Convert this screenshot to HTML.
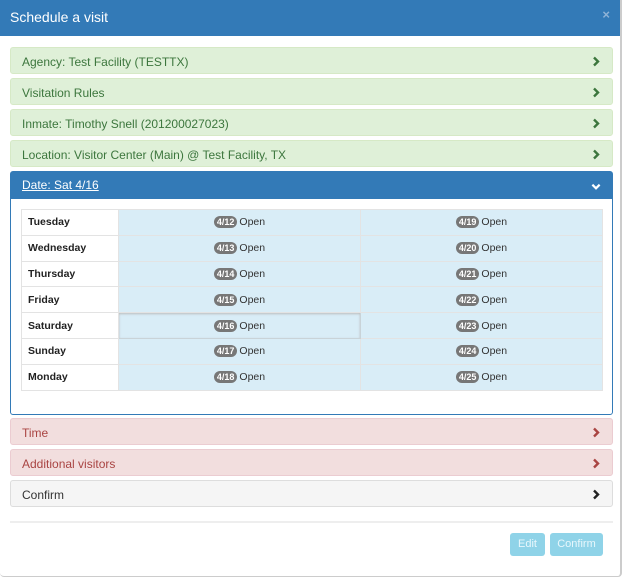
<!DOCTYPE html>
<html><head><style>
*{box-sizing:border-box;margin:0;padding:0}
body{width:624px;height:578px;background:#fff;font-family:"Liberation Sans",sans-serif;font-size:12px;position:relative;overflow:hidden}
.modal{position:absolute;left:0;top:0;width:622px;height:577px;border-right:2px solid #ccc;border-bottom:1px solid #ccc;border-radius:0 0 4px 4px}
.hdr{height:36px;background:#337ab7;color:#fff;font-size:14px;padding:9px 10px}
.x{position:absolute;right:10px;top:7px;color:#8fb3d6;font-size:13px;font-weight:bold}
.p{position:absolute;left:10px;width:603px;height:27px;border-radius:3px;padding:7px 11px;font-size:12px}
.g{background:#dff0d8;color:#3c763d;border:1px solid #d6e9c6}
.r{background:#f2dede;color:#a94442;border:1px solid #ebccd1}
.d{background:#f5f5f5;color:#333;border:1px solid #ddd}
.ch{position:absolute;right:11px;top:8px;width:10px;height:11px}
.date{position:absolute;left:10px;top:171px;width:603px;height:244px;border:1px solid #337ab7;border-radius:3px}
.dh{background:#337ab7;color:#fff;height:27px;padding:6px 11px;text-decoration:underline}
table{position:absolute;left:10px;top:37px;width:582px;border-collapse:collapse}
td{height:25.8px;border:1px solid #e3e3e3;font-size:10.5px}
td.n{width:97px;font-weight:bold;padding-left:6px;color:#222;background:#fff}
td.c{background:#d9edf7;text-align:center;color:#333}
.b{display:inline-block;background:#777;color:#fff;border-radius:8px;font-size:9px;font-weight:bold;padding:1px 3px;margin-right:2px}
.hr{position:absolute;left:10px;top:521px;width:603px;height:2px;background:#eee}
.btn{position:absolute;top:533px;height:23px;background:#8fd3e8;color:#e8f7fc;border-radius:3px;font-size:11px;text-align:center;padding-top:5px}
</style></head><body>
<div class="modal">
<div class="hdr">Schedule a visit</div><div class="x">×</div>
<div class="p g" style="top:47px">Agency: Test Facility (TESTTX)<svg class="ch" viewBox="0 0 10 11"><path d="M3 1.5L7 5.5L3 9.5" stroke="#3c763d" stroke-width="2.4" fill="none"/></svg></div>
<div class="p g" style="top:78px">Visitation Rules<svg class="ch" viewBox="0 0 10 11"><path d="M3 1.5L7 5.5L3 9.5" stroke="#3c763d" stroke-width="2.4" fill="none"/></svg></div>
<div class="p g" style="top:109px">Inmate: Timothy Snell (201200027023)<svg class="ch" viewBox="0 0 10 11"><path d="M3 1.5L7 5.5L3 9.5" stroke="#3c763d" stroke-width="2.4" fill="none"/></svg></div>
<div class="p g" style="top:140px">Location: Visitor Center (Main) @ Test Facility, TX<svg class="ch" viewBox="0 0 10 11"><path d="M3 1.5L7 5.5L3 9.5" stroke="#3c763d" stroke-width="2.4" fill="none"/></svg></div>
<div class="date"><div class="dh">Date: Sat 4/16<svg class="ch" viewBox="0 0 11 10" style="top:9px"><path d="M1.5 3L5.5 7L9.5 3" stroke="#fff" stroke-width="2.4" fill="none"/></svg></div>
<table>
<tr><td class="n">Tuesday</td><td class="c"><span class="b">4/12</span>Open</td><td class="c"><span class="b">4/19</span>Open</td></tr>
<tr><td class="n">Wednesday</td><td class="c"><span class="b">4/13</span>Open</td><td class="c"><span class="b">4/20</span>Open</td></tr>
<tr><td class="n">Thursday</td><td class="c"><span class="b">4/14</span>Open</td><td class="c"><span class="b">4/21</span>Open</td></tr>
<tr><td class="n">Friday</td><td class="c"><span class="b">4/15</span>Open</td><td class="c"><span class="b">4/22</span>Open</td></tr>
<tr><td class="n">Saturday</td><td class="c" style="border:1px solid #c9d3d8;box-shadow:inset 0 1px 2px #bbb"><span class="b">4/16</span>Open</td><td class="c"><span class="b">4/23</span>Open</td></tr>
<tr><td class="n">Sunday</td><td class="c"><span class="b">4/17</span>Open</td><td class="c"><span class="b">4/24</span>Open</td></tr>
<tr><td class="n">Monday</td><td class="c"><span class="b">4/18</span>Open</td><td class="c"><span class="b">4/25</span>Open</td></tr>
</table></div>
<div class="p r" style="top:418px">Time<svg class="ch" viewBox="0 0 10 11"><path d="M3 1.5L7 5.5L3 9.5" stroke="#a94442" stroke-width="2.4" fill="none"/></svg></div>
<div class="p r" style="top:449px">Additional visitors<svg class="ch" viewBox="0 0 10 11"><path d="M3 1.5L7 5.5L3 9.5" stroke="#a94442" stroke-width="2.4" fill="none"/></svg></div>
<div class="p d" style="top:480px">Confirm<svg class="ch" viewBox="0 0 10 11"><path d="M3 1.5L7 5.5L3 9.5" stroke="#222" stroke-width="2.4" fill="none"/></svg></div>
<div class="hr"></div>
<div class="btn" style="left:510px;width:35px">Edit</div>
<div class="btn" style="left:550px;width:53px">Confirm</div>
</div>
</body></html>
